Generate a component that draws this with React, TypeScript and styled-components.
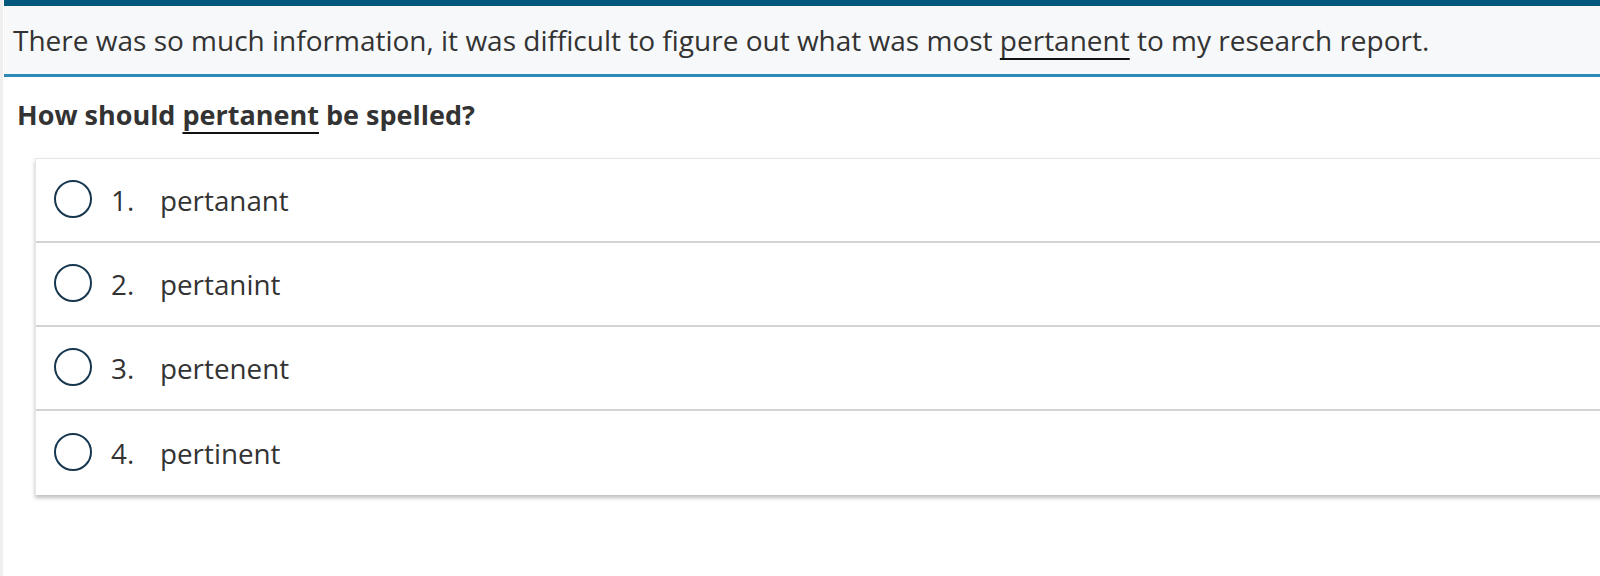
import React from "react";
import styled, { createGlobalStyle } from "styled-components";

const Global = createGlobalStyle`
  html, body { margin: 0; padding: 0; background: #ffffff; }
  body { font-family: "Open Sans", "Noto Sans", sans-serif; color: #333333; }
`;

const Page = styled.div`
  min-height: 576px;
  border-left: 3px solid #efefef;
  box-sizing: border-box;
  overflow: hidden;
`;

const Passage = styled.div`
  border-top: 6px solid #04587e;
  border-bottom: 3px solid #2f8ab8;
  background: #f7f8f9;
  height: 68px;
  box-sizing: content-box;
  display: flex;
  align-items: center;
  padding-left: 9px;
  font-size: 28px;
  color: #333333;
  margin-left: 1px;
`;

const Under = styled.span`
  text-decoration: underline;
  text-decoration-thickness: 2px;
  text-underline-offset: 7px;
  text-decoration-color: #111;
`;

const Question = styled.h2`
  margin: 0;
  padding: 20px 0 0 14px;
  height: 57px;
  box-sizing: border-box;
  font-size: 27px;
  font-weight: 700;
  line-height: 36px;
  color: #333333;
`;

const Card = styled.div`
  margin: 24px -40px 0 32px;
  background: #fff;
  border-top: 1px solid #e6e6e6;
  border-left: 1px solid #e6e6e6;
  box-shadow: 0 3px 4px rgba(0, 0, 0, 0.25);
`;

const Row = styled.label<{ $last?: boolean }>`
  display: flex;
  align-items: center;
  height: 84px;
  box-sizing: border-box;
  border-bottom: ${(p) => (p.$last ? "none" : "2px solid #d3d3d3")};
  padding-left: 18px;
  font-size: 27.8px;
  color: #333333;
`;

const Radio = styled.span`
  width: 34px;
  height: 34px;
  border-radius: 50%;
  border: 2px solid #16374f;
  flex: none;
  margin-top: -2px;
`;

const Num = styled.span`
  width: 49px;
  margin-left: 19px;
`;

const options = ["pertanant", "pertanint", "pertenent", "pertinent"];

export default function App() {
  return (
    <>
      <Global />
      <Page>
        <Passage>
          <span>
            There was so much information, it was difficult to figure out what was most{" "}
            <Under>pertanent</Under> to my research report.
          </span>
        </Passage>
        <Question>
          How should <Under>pertanent</Under> be spelled?
        </Question>
        <Card>
          {options.map((o, i) => (
            <Row key={o} $last={i === options.length - 1}>
              <Radio />
              <Num>{i + 1}.</Num>
              <span>{o}</span>
            </Row>
          ))}
        </Card>
      </Page>
    </>
  );
}
